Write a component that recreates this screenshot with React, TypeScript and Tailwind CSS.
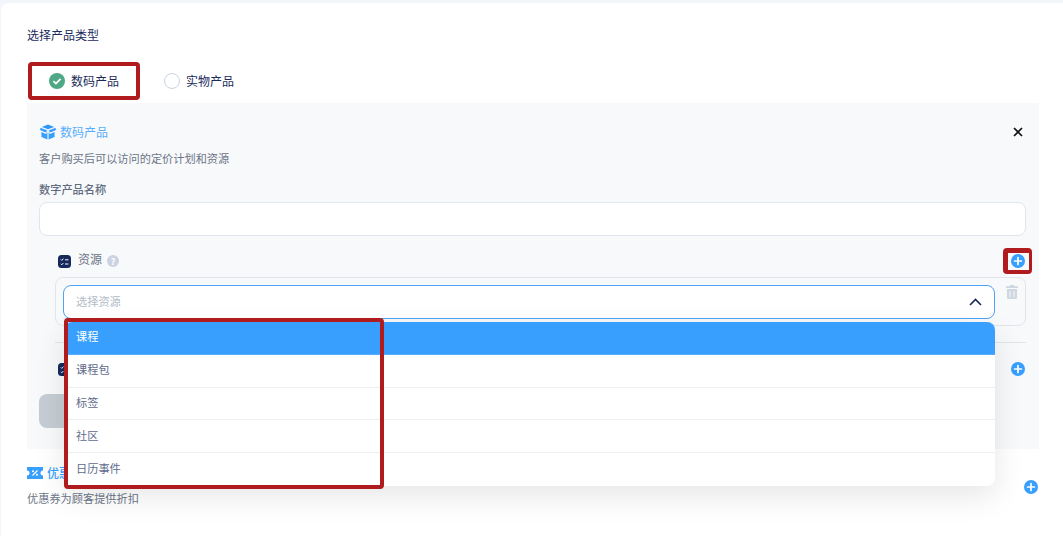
const PlusIcon = () => (
  <svg width="14" height="14" viewBox="0 0 14 14" className="mt-0.5 shrink-0">
    <circle cx="7" cy="7" r="7" fill="#389fff" />
    <path d="M7 3.600v6.800M3.600 7h6.800" stroke="#fff" strokeWidth="1.700" strokeLinecap="round" />
  </svg>
);

const ListIcon = () => (
  <svg width="13" height="13" viewBox="0 0 13 13" className="mt-0.5 shrink-0">
    <rect width="13" height="13" rx="3.500" fill="#16295c" />
    <path d="M2.800 4.400l1 1 1.600-1.800M2.800 8.800l1 1 1.600-1.800" stroke="#fff" strokeWidth="0.900" fill="none" />
    <path d="M7 4.800h3.400M7 9h3.400" stroke="#fff" strokeWidth="1" />
  </svg>
);

const options = ["课程", "课程包", "标签", "社区", "日历事件"];

export default function App() {
  return (
    <div className="relative h-[536px] overflow-hidden bg-[#f2f5fa] pl-px pt-[3px] font-['Noto_Sans_CJK_SC','Liberation_Sans',sans-serif] text-xs text-[#1c2b5c]">
      <div className="h-full rounded-tl-lg bg-white pl-[26px] pr-6 pt-[23px]">
        <div className="h-[18px] leading-[18px]">选择产品类型</div>

        {/* Product type */}
        <div className="mt-[18px] flex h-[38px] items-center pl-[22px]">
          <svg width="16" height="16" viewBox="0 0 16 16" className="shrink-0">
            <circle cx="8" cy="8" r="8" fill="#4ea886" />
            <path d="M4.400 8.200l2.500 2.400 4.700-4.800" stroke="#fff" strokeWidth="1.800" fill="none" />
          </svg>
          <span className="ml-1.5">数码产品</span>
          <span className="ml-[45px] h-4 w-4 rounded-full border border-[#cbd3e1] bg-white" />
          <span className="ml-1.5">实物产品</span>
        </div>

        {/* Digital product panel */}
        <div className="mt-[3px] bg-[#f8f9fb] pb-[21px] pl-3 pr-[13px] pt-5">
          <div className="flex h-[18px] items-center justify-between pr-[3px]">
            <div className="flex items-center gap-1 pl-px text-[#58aefc]">
              <svg width="16" height="16" viewBox="0 0 17 16" className="shrink-0">
                <path d="M8.500 0L15 2.600 8.500 5.200 2 2.600z" fill="#2f97f7" />
                <path d="M.5 3.400L7.900 6.300 6 8.600 0 6z" fill="#389fff" />
                <path d="M16.500 3.400L9.100 6.300 11 8.600l6-2.600z" fill="#389fff" />
                <path d="M1.500 7.900l4.900 2.100 1.500-1.900V16l-6.400-2.700z" fill="#389fff" />
                <path d="M15.500 7.900L10.600 10 9.100 8.100V16l6.400-2.700z" fill="#389fff" />
              </svg>
              <span>数码产品</span>
            </div>
            <svg width="10" height="10" viewBox="0 0 10 10" className="shrink-0">
              <path d="M1 1l8 8M9 1l-8 8" stroke="#111" strokeWidth="1.700" />
            </svg>
          </div>
          <p className="mt-2 h-[18px] text-[11.2px] leading-[18px] text-[#6b7587]">客户购买后可以访问的定价计划和资源</p>
          <label className="mt-[13px] block h-[18px] text-[11.2px] font-medium leading-[18px] text-[#606b80]">数字产品名称</label>
          <div className="mt-1 h-[34px] rounded-lg border border-[#e2e6ec] bg-white" />

          {/* Resources */}
          <div className="mt-[15px] flex h-[18px] items-center justify-between pl-[19px] pr-px">
            <div className="flex items-center">
              <ListIcon />
              <span className="-mt-0.5 ml-[7px] text-[#6b7587]">资源</span>
              <span className="ml-[5px] mt-0.5 flex h-3 w-3 items-center justify-center rounded-full bg-[#cbd3e1] text-[9px] font-bold leading-none text-white">?</span>
            </div>
            <PlusIcon />
          </div>
          <div className="ml-4 mt-2 flex h-[49px] items-start gap-[11px] rounded-lg border border-[#e2e6ec] pl-[7px] pt-[7px]">
            <div className="flex h-[34px] w-[932px] items-center justify-between rounded-lg border border-[#4ea3f5] bg-white pb-0.5 pl-3 pr-3 text-[11.2px] text-[#b4bcc8]">
              <span>选择资源</span>
              <svg width="13" height="8" viewBox="0 0 13 8" className="mt-0.5 shrink-0">
                <path d="M1 7l5.500-5.500L12 7" stroke="#16295c" strokeWidth="1.600" fill="none" />
              </svg>
            </div>
            <svg width="12" height="14" viewBox="0 0 12 14" className="shrink-0">
              <path d="M4.200 0h3.600l.5 1.300H12v1.600H0V1.300h3.700z" fill="#cfd7e2" />
              <path d="M1 4h10v8.600c0 .8-.6 1.400-1.400 1.400H2.400C1.600 14 1 13.400 1 12.600z" fill="#cfd7e2" />
              <path d="M4 6v6M8 6v6" stroke="#f8f9fb" strokeWidth="1" />
            </svg>
          </div>
          <div className="ml-4 mt-4 h-px bg-[#e2e5ea]" />

          {/* Second section, its label is covered by the open menu */}
          <div className="mt-4 flex h-[18px] items-center justify-between pl-[19px] pr-px">
            <ListIcon />
            <PlusIcon />
          </div>
          <div className="mt-[17px] h-[34px] w-[120px] rounded-lg bg-[#c5ccd3]" />
        </div>

        {/* Coupons */}
        <div className="mt-[15px] flex items-center justify-between pr-px">
          <div>
            <div className="flex h-[18px] items-center gap-1 font-medium text-[#389fff]">
              <svg width="16" height="12" viewBox="0 0 16 12" className="shrink-0">
                <path d="M0 0h16v3.500a2.500 2.500 0 000 5V12H0V8.500a2.500 2.500 0 000-5z" fill="#389fff" />
                <path d="M5.500 8.500l5-5" stroke="#fff" strokeWidth="1.200" />
                <circle cx="6" cy="4.200" r="1" fill="#fff" />
                <circle cx="10" cy="7.800" r="1" fill="#fff" />
              </svg>
              <span>优惠券</span>
            </div>
            <p className="mt-[7px] h-[18px] text-[11.2px] leading-[18px] text-[#6b7587]">优惠券为顾客提供折扣</p>
          </div>
          <div className="pt-px">
            <PlusIcon />
          </div>
        </div>
      </div>

      {/* Open select menu */}
      <ul className="absolute left-16 top-[322px] h-[164px] w-[931px] overflow-hidden rounded-lg bg-white text-[11.2px] shadow-[0_10px_30px_rgba(0,0,0,0.1)]">
        {options.map((option, i) => (
          <li
            key={option}
            className={
              i === 0
                ? "flex h-[32.75px] items-center border-b border-[#58aefc] bg-[#389fff] pb-0.5 pl-3 text-white"
                : "flex h-[32.75px] items-center border-b border-[#eeeff2] pb-0.5 pl-3 text-[#606b8c] last:border-b-0"
            }
          >
            {option}
          </li>
        ))}
      </ul>

      {/* Annotation frames */}
      <div className="absolute left-7 top-[62px] h-[38px] w-28 rounded-sm border-4 border-[#b01c1e]" />
      <div className="absolute left-[1003px] top-[248px] h-[26px] w-[29px] rounded-sm border-b-4 border-l-[5px] border-r-[3px] border-t-[5px] border-[#b01c1e]" />
      <div className="absolute left-16 top-[318px] h-[171px] w-[320px] rounded-sm border-4 border-[#b01c1e]" />
    </div>
  );
}
